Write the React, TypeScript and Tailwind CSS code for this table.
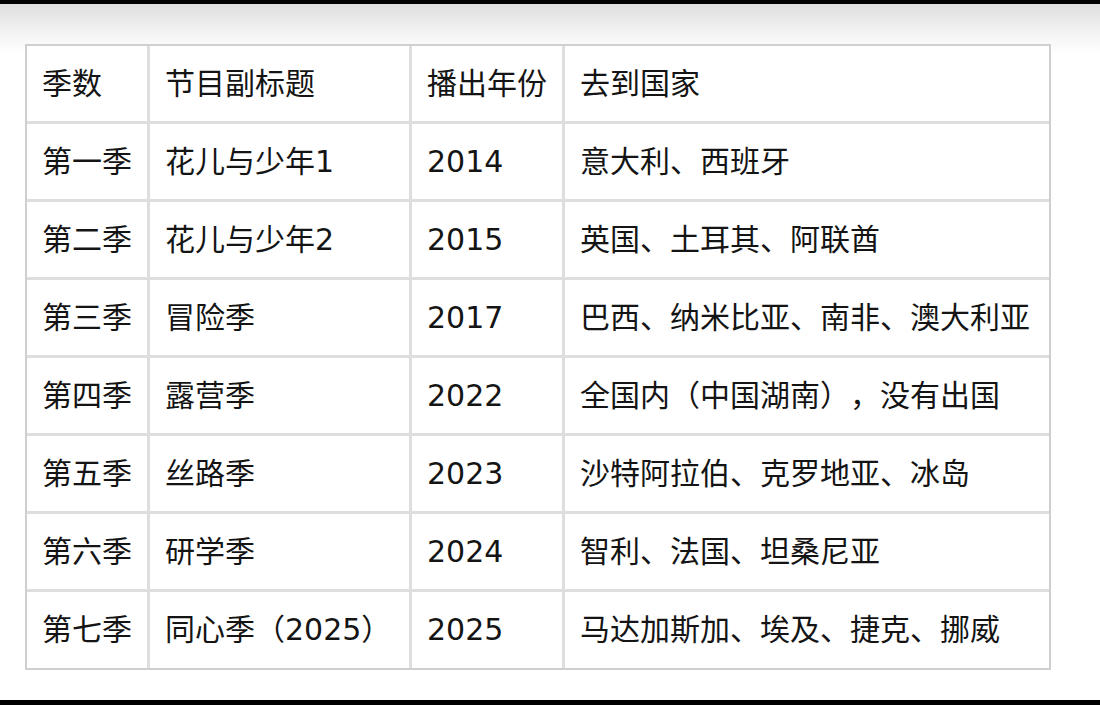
import React from 'react';

const rows = [
  ['季数', '节目副标题', '播出年份', '去到国家'],
  ['第一季', '花儿与少年1', '2014', '意大利、西班牙'],
  ['第二季', '花儿与少年2', '2015', '英国、土耳其、阿联酋'],
  ['第三季', '冒险季', '2017', '巴西、纳米比亚、南非、澳大利亚'],
  ['第四季', '露营季', '2022', '全国内（中国湖南），没有出国'],
  ['第五季', '丝路季', '2023', '沙特阿拉伯、克罗地亚、冰岛'],
  ['第六季', '研学季', '2024', '智利、法国、坦桑尼亚'],
  ['第七季', '同心季（2025）', '2025', '马达加斯加、埃及、捷克、挪威'],
];

const widths = ['w-[122px]', 'w-[262px]', 'w-[152px]', 'w-[484px]'];

const App = () => {
  return (
    <div className="h-[705px] w-[1100px] flex flex-col bg-white overflow-hidden">
      <div className="h-[4px] bg-black shrink-0" />

      {/* Table area */}
      <div className="flex-1 pl-[25px] pt-[40px] bg-[linear-gradient(to_bottom,#dedede_0px,#f4f4f4_30px,#ffffff_50px)]">
        <table
          className="table-fixed border-separate border-spacing-0 border-2 border-[#cfcfcf] bg-white text-[30px] text-[#141414] [text-spacing-trim:space-all]"
          style={{ fontFamily: '"DejaVu Sans", "Noto Sans CJK SC", sans-serif' }}
        >
          <tbody>
            {rows.map((row, i) => (
              <tr key={i}>
                {row.map((cell, j) => (
                  <td
                    key={j}
                    className={`${widths[j]} ${
                      i < rows.length - 1 ? 'h-[78px] border-b-[3px]' : 'h-[76px]'
                    } px-[15px] align-middle leading-none whitespace-nowrap border-[#dedede] ${
                      j < 3 ? 'border-r-[3px]' : ''
                    }`}
                  >
                    {cell}
                  </td>
                ))}
              </tr>
            ))}
          </tbody>
        </table>
      </div>

      <div className="h-[5px] bg-black shrink-0" />
    </div>
  );
};

export default App;
